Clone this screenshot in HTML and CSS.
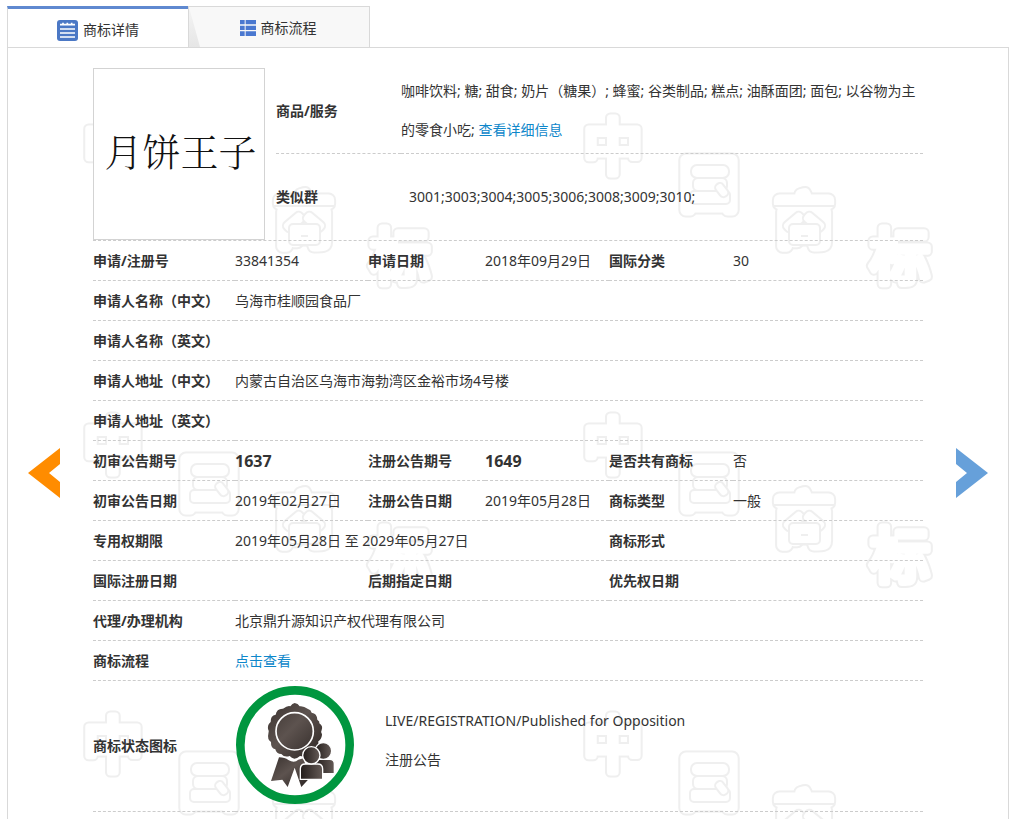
FILE: index.html
```html
<!DOCTYPE html>
<html lang="zh-CN">
<head>
<meta charset="utf-8">
<title>商标详情</title>
<link rel="stylesheet" href="styles.css">
</head>
<body>
<nav class="tabs" role="tablist">
  <button class="tab tab-active" type="button" role="tab" aria-selected="true">
    <svg class="icon-detail" viewBox="0 0 63 63" aria-hidden="true">
      <rect width="63" height="63" rx="9" fill="#4b78c5"/>
      <path d="M9 14h45M9 27h45M9 39h45M9 51h45" stroke="#fff" stroke-width="5"/>
      <path d="M18 8v5M31 8v5M44 8v5" stroke="#fff" stroke-width="5"/>
    </svg>
    <span>商标详情</span>
  </button>
  <button class="tab tab-idle" type="button" role="tab" aria-selected="false">
    <svg class="icon-flow" viewBox="0 0 48 48" aria-hidden="true">
      <path d="M0 0h14v13H0zM17 0h31v13H17zM0 17h14v13H0zM17 17h31v13H17zM0 34h14v14H0zM17 34h31v14H17z" fill="#4a78d0"/>
    </svg>
    <span>商标流程</span>
  </button>
</nav>

<main class="panel">
  <svg class="watermark" aria-hidden="true">
    <defs>
      <pattern id="mark" x="72" y="60" width="500" height="299" patternUnits="userSpaceOnUse">
        <g class="mark-edge">
          <text x="33" y="61">中</text><text class="solid" x="129" y="97">国</text><text class="solid" x="224" y="133">商</text><text x="320" y="171">标</text>
        </g>
        <g class="mark-face">
          <text x="33" y="61">中</text><text class="solid" x="129" y="97">国</text><text class="solid" x="224" y="133">商</text><text x="320" y="171">标</text>
        </g>
        <g class="mark-detail">
          <rect x="110" y="83" width="40" height="13" rx="4"/>
          <rect x="113" y="70" width="34" height="13" rx="5"/>
          <rect x="111" y="57" width="38" height="13" rx="6"/>
          <rect x="137" y="75" width="9" height="15" rx="4" transform="rotate(-38 141 82)"/>
          <path d="M193 98h62"/>
          <rect x="202" y="108" width="24" height="12" rx="5" transform="rotate(-40 214 114)"/>
          <rect x="222" y="108" width="24" height="12" rx="5" transform="rotate(40 234 114)"/>
          <rect x="209" y="116" width="31" height="21" rx="4"/>
          <path d="M221 128h7"/>
        </g>
      </pattern>
    </defs>
    <rect width="100%" height="100%" fill="url(#mark)"/>
  </svg>

  <button class="arrow arrow-prev" type="button" aria-label="上一条">
    <svg viewBox="0 0 32 50"><path d="M32 0v16L21 25l11 9v16L0 25z"/></svg>
  </button>

  <div class="content">
    <section class="summary">
      <div class="mark-image">月饼王子</div>
      <table class="goods">
        <tr>
          <th scope="row">商品/服务</th>
          <td>咖啡饮料; 糖; 甜食; 奶片（糖果）; 蜂蜜; 谷类制品; 糕点; 油酥面团; 面包; 以谷物为主的零食小吃; <a href="#">查看详细信息</a></td>
        </tr>
        <tr>
          <th scope="row">类似群</th>
          <td class="groups">3001;3003;3004;3005;3006;3008;3009;3010;</td>
        </tr>
      </table>
    </section>

    <table class="info">
      <colgroup><col class="c1"><col class="c2"><col class="c3"><col class="c4"><col class="c5"><col></colgroup>
      <tr><th scope="row">申请/注册号</th><td>33841354</td><th scope="row">申请日期</th><td>2018年09月29日</td><th scope="row">国际分类</th><td>30</td></tr>
      <tr><th scope="row">申请人名称（中文）</th><td colspan="5">乌海市桂顺园食品厂</td></tr>
      <tr><th scope="row">申请人名称（英文）</th><td colspan="5"></td></tr>
      <tr><th scope="row">申请人地址（中文）</th><td colspan="5">内蒙古自治区乌海市海勃湾区金裕市场4号楼</td></tr>
      <tr><th scope="row">申请人地址（英文）</th><td colspan="5"></td></tr>
      <tr><th scope="row">初审公告期号</th><td class="issue">1637</td><th scope="row">注册公告期号</th><td class="issue">1649</td><th scope="row">是否共有商标</th><td>否</td></tr>
      <tr><th scope="row">初审公告日期</th><td>2019年02月27日</td><th scope="row">注册公告日期</th><td>2019年05月28日</td><th scope="row">商标类型</th><td>一般</td></tr>
      <tr><th scope="row">专用权期限</th><td colspan="3">2019年05月28日 至 2029年05月27日</td><th scope="row">商标形式</th><td></td></tr>
      <tr><th scope="row">国际注册日期</th><td></td><th scope="row">后期指定日期</th><td></td><th scope="row">优先权日期</th><td></td></tr>
      <tr><th scope="row">代理/办理机构</th><td colspan="5">北京鼎升源知识产权代理有限公司</td></tr>
      <tr><th scope="row">商标流程</th><td colspan="5"><a href="#">点击查看</a></td></tr>
      <tr class="status-row">
        <th scope="row">商标状态图标</th>
        <td colspan="5">
          <div class="status">
            <svg class="badge" viewBox="33 15 354 354" aria-hidden="true">
              <defs>
                <linearGradient id="metal" x1="0" y1="0" x2="1" y2="1">
                  <stop offset="0" stop-color="#3a322f"/><stop offset=".45" stop-color="#5d534f"/><stop offset="1" stop-color="#2b2422"/>
                </linearGradient>
                <linearGradient id="person" x1="0" y1="0" x2="1" y2="0">
                  <stop offset="0" stop-color="#231d1b"/><stop offset="1" stop-color="#655b57"/>
                </linearGradient>
              </defs>
              <circle cx="210" cy="192" r="164" fill="#fff" stroke="#00963f" stroke-width="26"/>
              <path d="M162 229Q180 229 190 237Q208 248 220 236L236 232L252 293L229 318L209 260L188 318L172 296L138 300Z" fill="url(#metal)"/>
              <path d="M209 66Q219 67 224 76Q235 74 249 84Q258 86 260 95Q276 97 277 116Q285 121 283 127Q295 135 290 147Q286 153 291 160Q291 174 280 181Q282 197 269 204Q264 217 250 217Q242 229 225 225Q216 233 208 233Q200 231 194 225Q178 230 169 219Q154 219 151 205Q137 202 138 183Q126 174 130 159Q134 151 129 144Q127 131 137 123Q136 104 152 101Q155 82 174 83Q188 73 196 76Q202 67 209 66Z" fill="url(#metal)"/>
              <circle cx="209" cy="151" r="56" fill="none" stroke="#fff" stroke-width="5"/>
              <g fill="url(#person)" stroke="#fff" stroke-width="4">
                <path d="M271 278V249Q271 235 284 235H314Q328 235 328 249V278Z"/>
                <circle cx="295" cy="210" r="25"/>
                <path d="M226 295V264Q226 249 241 249H278Q293 249 293 264V295Z"/>
                <circle cx="259" cy="223" r="26"/>
              </g>
            </svg>
            <div class="status-text">
              <div>LIVE/REGISTRATION/Published for Opposition</div>
              <div>注册公告</div>
            </div>
          </div>
        </td>
      </tr>
    </table>
  </div>

  <button class="arrow arrow-next" type="button" aria-label="下一条">
    <svg viewBox="0 0 32 50"><path d="M0 0v16L11 25L0 34v16L32 25z"/></svg>
  </button>
</main>
</body>
</html>
```
FILE: styles.css
```css
* {
  box-sizing: border-box;
}

body {
  margin: 0;
  padding: 6px 7px 0;
  background: #fff;
  color: #333;
  font: 14px/20px "Noto Sans", "Noto Sans CJK SC", sans-serif;
}

a {
  color: #0e87ca;
  text-decoration: none;
}

button {
  border: 0;
  padding: 0;
  background: none;
  color: inherit;
  font: inherit;
  cursor: pointer;
}

.tabs {
  display: flex;
}

.tab {
  position: relative;
  display: flex;
  align-items: center;
  justify-content: center;
  gap: 5px;
  width: 181px;
  height: 41px;
}

.tab-active {
  padding-top: 4px;
  border-top: 3px solid #5f89d0;
  border-left: 1px solid #d9d9d9;
}

.tab-idle {
  padding: 2px 2px 0 0;
  width: 182px;
  border: 1px solid #d9d9d9;
  border-bottom: 0;
  background: #f8f8f8;
}

.tab-idle::before {
  content: "";
  position: absolute;
  left: 0;
  top: 0;
  width: 11px;
  height: 100%;
  background: linear-gradient(#f4f4f4, #e6e6e6);
  clip-path: polygon(0 0, 100% 100%, 0 100%);
}

.icon-detail {
  width: 21px;
  height: 21px;
}

.icon-flow {
  width: 16px;
  height: 16px;
}

.panel {
  position: relative;
  display: flex;
  align-items: flex-start;
  gap: 33px;
  padding: 20px 20px 7px;
  border: 1px solid #d9d9d9;
  border-bottom: 0;
}

.watermark {
  position: absolute;
  inset: 0;
  z-index: -1;
  width: 100%;
  height: 100%;
}

.watermark text {
  font: 400 60px "Noto Sans CJK SC", sans-serif;
  text-anchor: middle;
}

.watermark .solid {
  font-size: 56px;
}

.mark-edge {
  fill: #efefef;
  stroke: #efefef;
  stroke-width: 11;
  stroke-linejoin: round;
}

.mark-edge .solid {
  stroke-width: 15;
}

.mark-face {
  fill: #fff;
  stroke: #fff;
  stroke-width: 7;
  stroke-linejoin: round;
}

.mark-face .solid {
  stroke-width: 11;
}

.mark-detail {
  fill: #fff;
  stroke: #efefef;
  stroke-width: 2;
}

.arrow {
  flex: none;
  width: 32px;
  margin-top: 380px;
}

.arrow svg {
  display: block;
  width: 100%;
}

.arrow-prev {
  fill: #ff8c00;
}

.arrow-next {
  fill: #66a0da;
}

.content {
  flex: 1;
  min-width: 0;
}

.summary {
  display: flex;
  gap: 11px;
  border-bottom: 1px dashed #ccc;
}

.mark-image {
  display: flex;
  flex: none;
  align-items: center;
  justify-content: center;
  width: 172px;
  height: 172px;
  padding: 0 0 8px 3px;
  border: 1px solid #d3d3d3;
  background: #fff;
  color: #111;
  font: 300 38px/40px "Noto Serif CJK SC", "Noto Sans CJK SC", serif;
  white-space: nowrap;
}

table {
  width: 100%;
  border-collapse: separate;
  border-spacing: 0;
  table-layout: fixed;
}

th,
td {
  padding: 0;
  text-align: left;
  vertical-align: middle;
}

.goods {
  flex: 1;
  width: auto;
}

.goods th {
  width: 125px;
}

.goods tr {
  height: 86px;
}

.goods td {
  padding-bottom: 2px;
  line-height: 39px;
}

.goods tr:first-child > * {
  border-bottom: 1px dashed #ccc;
}

.goods .groups {
  padding-left: 8px;
}

.c1 {
  width: 142px;
}

.c2 {
  width: 133px;
}

.c3 {
  width: 117px;
}

.c4,
.c5 {
  width: 124px;
}

.info th,
.info td {
  height: 40px;
  border-bottom: 1px dashed #ccc;
  white-space: nowrap;
}

.info .issue {
  font-size: 16px;
  font-weight: 700;
}

.info .status-row > * {
  height: 131px;
}

.info .status-row td {
  padding-bottom: 3px;
}

.status {
  display: flex;
  align-items: center;
  gap: 31px;
  padding-left: 1px;
}

.badge {
  width: 118px;
  height: 118px;
}

.status-text {
  padding-bottom: 9px;
  line-height: 39px;
}
```
